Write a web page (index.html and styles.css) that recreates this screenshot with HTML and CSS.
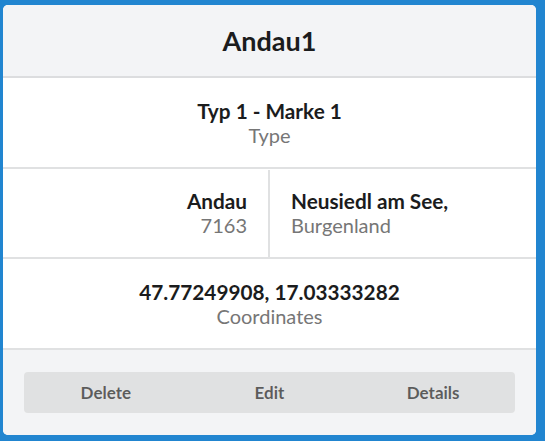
FILE: index.html
```html
<!DOCTYPE html>
<html>
<head>
<meta charset="utf-8">
<link rel="stylesheet" href="styles.css">
</head>
<body>
<div class="card">
  <div class="header">Andau1</div>
  <div class="row center">
    <div class="value">Typ 1 - Marke 1</div>
    <div class="label">Type</div>
  </div>
  <div class="row split">
    <div class="col left">
      <div class="value">Andau</div>
      <div class="label">7163</div>
    </div>
    <div class="col right">
      <div class="value">Neusiedl am See,</div>
      <div class="label">Burgenland</div>
    </div>
  </div>
  <div class="row center">
    <div class="value">47.77249908, 17.03333282</div>
    <div class="label">Coordinates</div>
  </div>
  <div class="footer">
    <div class="buttons">
      <button class="btn">Delete</button>
      <button class="btn">Edit</button>
      <button class="btn">Details</button>
    </div>
  </div>
</div>
</body>
</html>
```
FILE: styles.css
```css
html, body {
  margin: 0;
  padding: 0;
}
body {
  background: #2185d0;
  font-family: Lato, "Open Sans", sans-serif;
  width: 545px;
  height: 441px;
  padding: 5px 9px 6px 3px;
  box-sizing: border-box;
}
.card {
  background: #fff;
  border-radius: 5px;
  overflow: hidden;
  display: flex;
  flex-direction: column;
  height: 430px;
}
.header {
  background: #f3f4f6;
  height: 71px;
  border-bottom: 2px solid #dcdddf;
  display: flex;
  align-items: center;
  justify-content: center;
  font-size: 27px;
  font-weight: 700;
  color: #1b1c1d;
}
.row {
  height: 88px;
  padding-top: 1px;
  border-bottom: 2px solid #e0e1e2;
  box-sizing: content-box;
}
.center {
  display: flex;
  flex-direction: column;
  align-items: center;
  justify-content: center;
}
.value {
  font-size: 20.75px;
  font-weight: 700;
  color: #1b1c1d;
  line-height: 24px;
}
.label {
  font-size: 20px;
  color: #767676;
  line-height: 24px;
}
.split {
  display: grid;
  grid-template-columns: 267px 1fr;
}
.col {
  display: flex;
  flex-direction: column;
  justify-content: center;
}
.left {
  align-items: flex-end;
  padding-right: 21px;
  border-right: 2px solid #e0e1e2;
}
.right {
  align-items: flex-start;
  padding-left: 21px;
}
.footer {
  flex: 1;
  background: #f3f4f6;
  padding: 22px 21px;
  box-sizing: border-box;
}
.buttons {
  display: grid;
  grid-template-columns: 1fr 1fr 1fr;
  background: #e0e1e2;
  border-radius: 4px;
  height: 41px;
}
.btn {
  border: 0;
  background: transparent;
  font-family: Lato, sans-serif;
  font-size: 17px;
  font-weight: 700;
  color: rgba(0,0,0,0.6);
  padding: 0;
}
```
